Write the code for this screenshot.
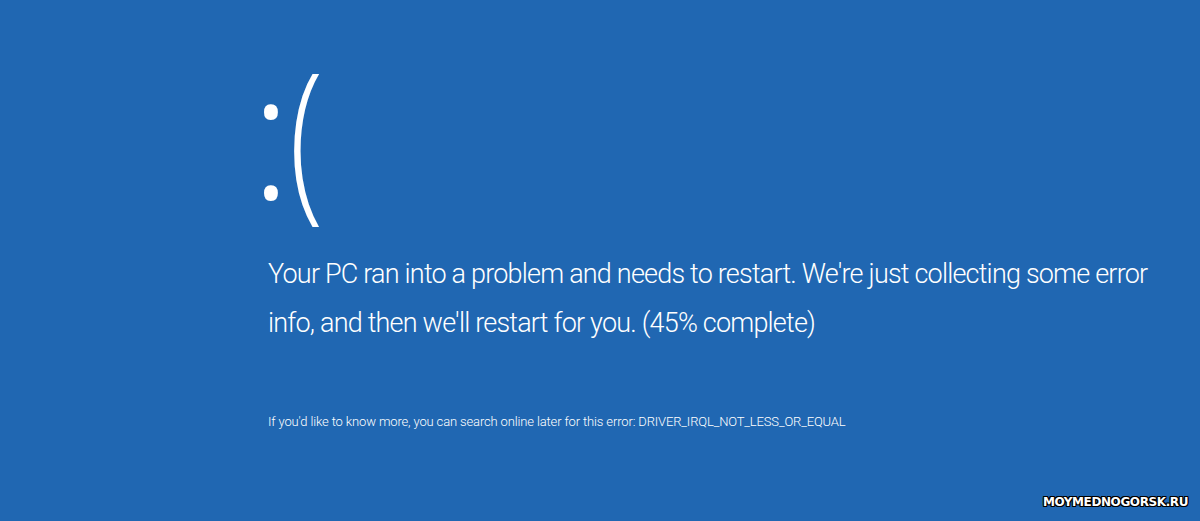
import React from 'react'

const App: React.FC = () => {
  return (
    <div className="relative h-[521px] w-[1200px] overflow-hidden bg-[#2067b2] text-white font-['Roboto','Segoe_UI',sans-serif]">
      <div className="pl-[250px] pt-[31px]">
        <div className="h-[200px] font-['Open_Sans',sans-serif] text-[175px] font-light leading-[200px] tracking-[-5px]">
          <span>:</span>
          <span className="inline-block origin-left translate-x-[2px] scale-x-[0.72]">(</span>
        </div>
        <p className="mt-[19px] max-w-[902px] pl-[18px] text-[27px] font-light leading-[49px] tracking-[-0.8px]">
          Your PC ran into a problem and needs to restart. We're just collecting some error info, and then we'll restart for you. (45% complete)
        </p>
        <p className="mt-[64px] pl-[18px] text-[13px] font-light tracking-[-0.14px]">
          If you'd like to know more, you can search online later for this error: DRIVER_IRQL_NOT_LESS_OR_EQUAL
        </p>
      </div>
      <div className="absolute bottom-[10px] right-[12px] font-['DejaVu_Sans',sans-serif] text-[12px] font-bold tracking-[-0.4px] [text-shadow:1px_0_0_#000,-1px_0_0_#000,0_1px_0_#000,0_-1px_0_#000,1px_1px_0_#000,-1px_-1px_0_#000,1px_-1px_0_#000,-1px_1px_0_#000]">
        MOYMEDNOGORSK.RU
      </div>
    </div>
  )
}

export default App
